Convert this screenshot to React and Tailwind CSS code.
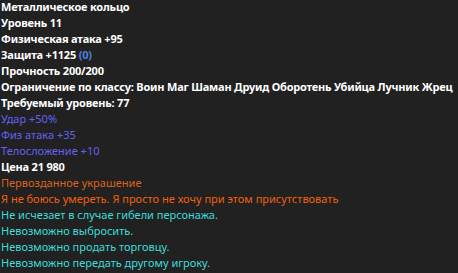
import React from "react";

const lines = [
  { t: "Металлическое кольцо", c: "text-[#ffffff] font-bold tracking-[-0.2px]" },
  { t: "Уровень 11", c: "text-[#ffffff] font-bold tracking-[-0.2px]" },
  { t: "Физическая атака +95", c: "text-[#ffffff] font-bold tracking-[-0.2px]" },
  { t: "Защита +1125 ", extra: "(0)", c: "text-[#ffffff] font-bold tracking-[-0.2px]" },
  { t: "Прочность 200/200", c: "text-[#ffffff] font-bold tracking-[-0.2px]" },
  { t: "Ограничение по классу: Воин Маг Шаман Друид Оборотень Убийца Лучник Жрец", c: "text-[#ffffff] font-bold tracking-[-0.2px]" },
  { t: "Требуемый уровень: 77", c: "text-[#ffffff] font-bold tracking-[-0.2px]" },
  { t: "Удар +50%", c: "text-[#6262f2]" },
  { t: "Физ атака +35", c: "text-[#6262f2]" },
  { t: "Телосложение +10", c: "text-[#6262f2]" },
  { t: "Цена 21 980", c: "text-[#ffffff] font-bold tracking-[-0.2px]" },
  { t: "Первозданное украшение", c: "text-[#dc631c]" },
  { t: "Я не боюсь умереть. Я просто не хочу при этом присутствовать", c: "text-[#f2600e]" },
  { t: "Не исчезает в случае гибели персонажа.", c: "text-[#3ddcdc]" },
  { t: "Невозможно выбросить.", c: "text-[#3ddcdc]" },
  { t: "Невозможно продать торговцу.", c: "text-[#3ddcdc]" },
  { t: "Невозможно передать другому игроку.", c: "text-[#3ddcdc]" },
];

export default function App() {
  return (
    <div className="w-[458px] h-[273px] overflow-hidden bg-[#212121] font-['Noto_Sans',sans-serif] text-[11px] leading-[16px]">
      <div className="mt-[-1px] pl-px flex flex-col">
        {lines.map((l, i) => (
          <div key={i} className={`h-[16px] whitespace-nowrap ${l.c}`}>
            {l.t}
            {l.extra && <span className="text-[#4a82e0]">{l.extra}</span>}
          </div>
        ))}
      </div>
    </div>
  );
}
